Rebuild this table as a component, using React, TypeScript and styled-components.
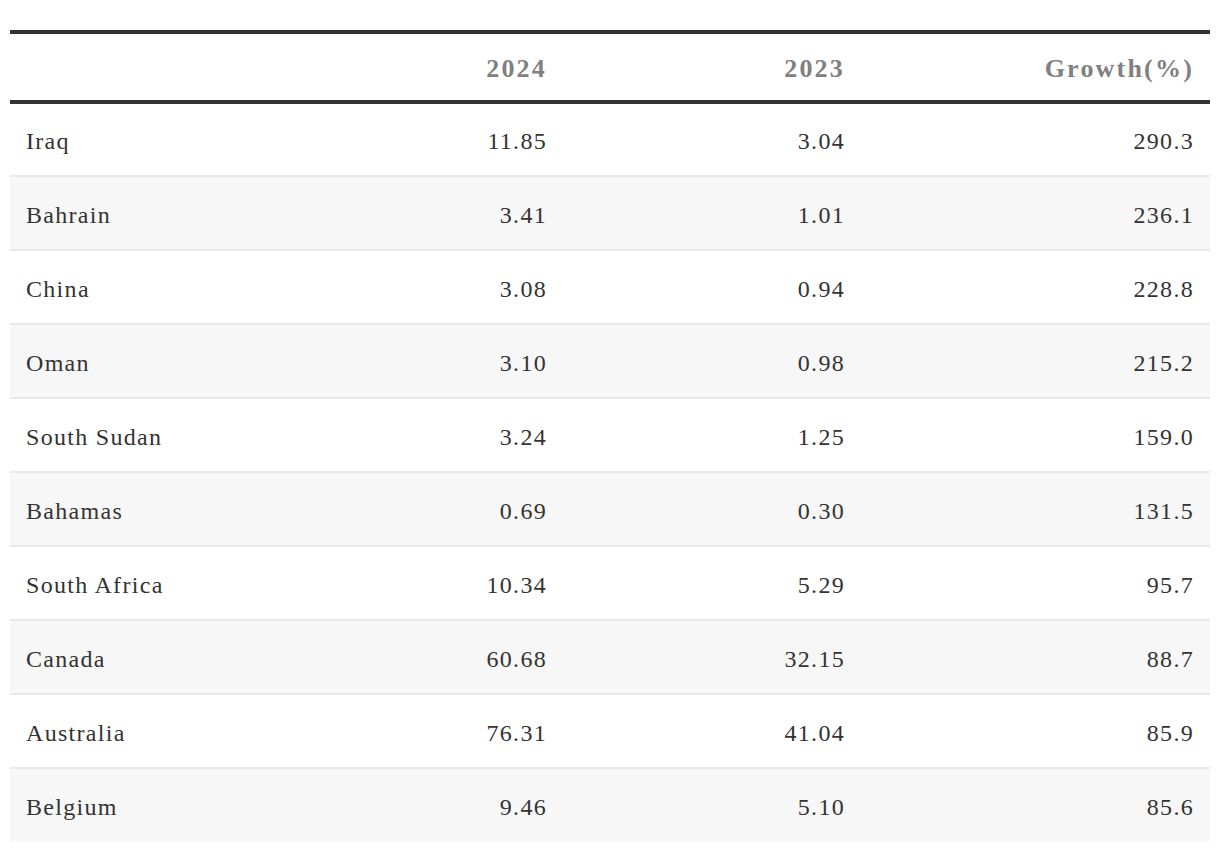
import styled, { createGlobalStyle } from 'styled-components';

const GlobalStyle = createGlobalStyle`
  html, body {
    margin: 0;
    padding: 0;
    background: #fff;
  }
  body {
    font-family: "Liberation Serif", serif;
    color: #333;
  }
  table, th, td {
    font-family: "Liberation Serif", serif;
  }
`;

const Page = styled.div`
  padding: 30px 10px 0;
`;

const Table = styled.table`
  width: 1200px;
  border-collapse: collapse;
  table-layout: fixed;
  border-top: 4px solid #333;
`;

const HeadRow = styled.tr`
  height: 70px;
  border-bottom: 4px solid #333;
`;

const HeadCell = styled.th<{ $align?: 'left' | 'right' }>`
  padding: 4px 16px 0;
  text-align: ${p => p.$align ?? 'right'};
  font-size: 26px;
  font-weight: 700;
  letter-spacing: 2.2px;
  color: #808080;
  vertical-align: middle;
`;

const BodyRow = styled.tr<{ $shaded: boolean }>`
  height: 74px;
  background: ${p => (p.$shaded ? '#f7f7f7' : '#fff')};
  border-bottom: 2px solid #e8e8e8;

  &:last-child {
    border-bottom: none;
  }
`;

const Cell = styled.td<{ $align?: 'left' | 'right' }>`
  padding: 4px 16px 0;
  text-align: ${p => p.$align ?? 'right'};
  font-size: 24px;
  letter-spacing: 1.3px;
  color: #333;
  vertical-align: middle;
`;

type Row = { country: string; y2024: string; y2023: string; growth: string };

const rows: Row[] = [
  { country: 'Iraq', y2024: '11.85', y2023: '3.04', growth: '290.3' },
  { country: 'Bahrain', y2024: '3.41', y2023: '1.01', growth: '236.1' },
  { country: 'China', y2024: '3.08', y2023: '0.94', growth: '228.8' },
  { country: 'Oman', y2024: '3.10', y2023: '0.98', growth: '215.2' },
  { country: 'South Sudan', y2024: '3.24', y2023: '1.25', growth: '159.0' },
  { country: 'Bahamas', y2024: '0.69', y2023: '0.30', growth: '131.5' },
  { country: 'South Africa', y2024: '10.34', y2023: '5.29', growth: '95.7' },
  { country: 'Canada', y2024: '60.68', y2023: '32.15', growth: '88.7' },
  { country: 'Australia', y2024: '76.31', y2023: '41.04', growth: '85.9' },
  { country: 'Belgium', y2024: '9.46', y2023: '5.10', growth: '85.6' },
];

export default function App() {
  return (
    <Page>
      <GlobalStyle />
      <Table>
        <colgroup>
          <col style={{ width: 255 }} />
          <col style={{ width: 298 }} />
          <col style={{ width: 298 }} />
          <col style={{ width: 349 }} />
        </colgroup>
        <thead>
          <HeadRow>
            <HeadCell $align="left" />
            <HeadCell>2024</HeadCell>
            <HeadCell>2023</HeadCell>
            <HeadCell>Growth(%)</HeadCell>
          </HeadRow>
        </thead>
        <tbody>
          {rows.map((r, i) => (
            <BodyRow key={r.country} $shaded={i % 2 === 1}>
              <Cell $align="left">{r.country}</Cell>
              <Cell>{r.y2024}</Cell>
              <Cell>{r.y2023}</Cell>
              <Cell>{r.growth}</Cell>
            </BodyRow>
          ))}
        </tbody>
      </Table>
    </Page>
  );
}
